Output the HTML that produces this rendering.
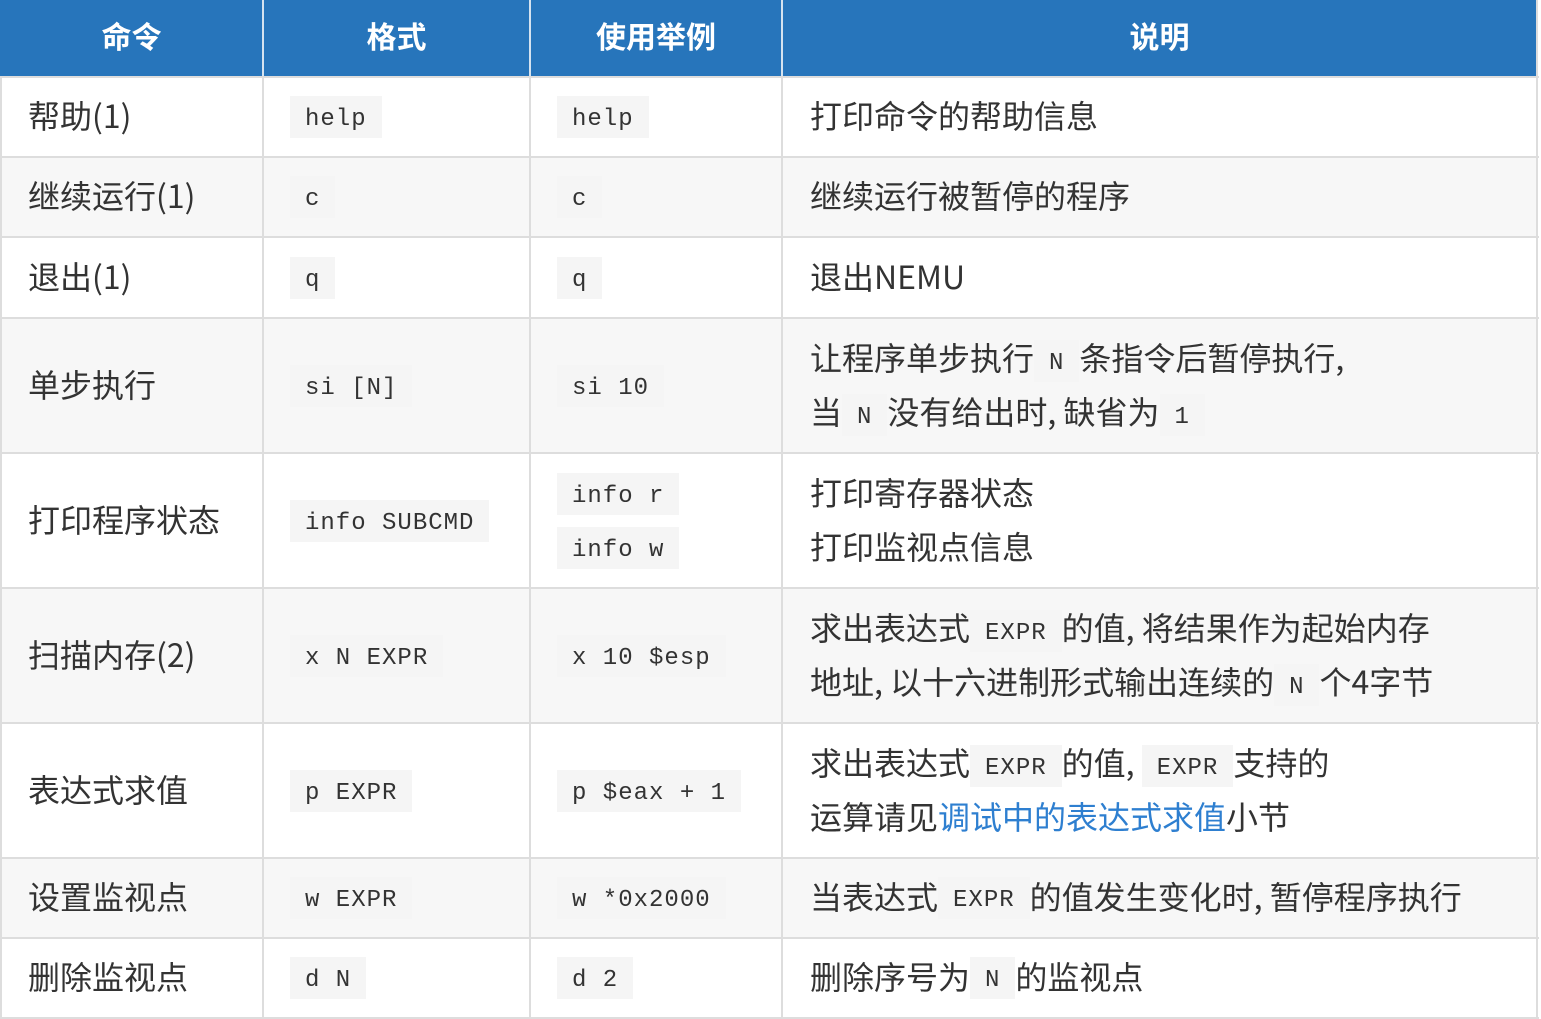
<!DOCTYPE html>
<html><head><meta charset="utf-8"><style>
*{margin:0;padding:0;box-sizing:border-box}
body{width:1541px;height:1019px;background:#fff;position:relative;overflow:hidden;font-family:"Noto Sans CJK SC","Liberation Sans",sans-serif;color:#333}
.c{position:absolute;display:flex;align-items:center;font-size:32px;padding-bottom:4px}
.h{background:#2775bb;color:#fff;font-weight:bold;justify-content:center;font-size:30px;padding-bottom:8px}
.g{background:#f7f7f7}
.vl{position:absolute;top:0;width:2px;height:1019px;background:#ddd}
.hl{position:absolute;left:0;width:1539px;height:2px;background:#ddd}
code{font-family:"Liberation Mono","DejaVu Sans Mono",monospace;font-size:24px;background:#f5f5f5;padding:5px 15px 0;height:42px;line-height:37px;display:inline-block;letter-spacing:1px;color:#333;vertical-align:middle;position:relative;top:2px}
.ml{display:block;line-height:54px}
.ml code{top:0}
.col{flex-direction:column;align-items:flex-start;justify-content:center}
a{color:#2e7fd0;text-decoration:none}
</style></head><body>
<div class="c h" style="left:0;top:0;width:263px;height:77px">命令</div>
<div class="c h" style="left:263px;top:0;width:267px;height:77px">格式</div>
<div class="c h" style="left:530px;top:0;width:252px;height:77px">使用举例</div>
<div class="c h" style="left:782px;top:0;width:755px;height:77px">说明</div>

<div class="c g" style="left:0;top:157px;width:1537px;height:80px"></div>
<div class="c g" style="left:0;top:318px;width:1537px;height:135px"></div>
<div class="c g" style="left:0;top:588px;width:1537px;height:135px"></div>
<div class="c g" style="left:0;top:858px;width:1537px;height:80px"></div>

<div class="c" style="left:28px;top:77px;height:80px">帮助(1)</div>
<div class="c" style="left:290px;top:77px;height:80px"><code>help</code></div>
<div class="c" style="left:557px;top:77px;height:80px"><code>help</code></div>
<div class="c t" style="left:810px;top:77px;height:80px">打印命令的帮助信息</div>

<div class="c" style="left:28px;top:157px;height:80px">继续运行(1)</div>
<div class="c" style="left:290px;top:157px;height:80px"><code>c</code></div>
<div class="c" style="left:557px;top:157px;height:80px"><code>c</code></div>
<div class="c t" style="left:810px;top:157px;height:80px">继续运行被暂停的程序</div>

<div class="c" style="left:28px;top:237px;height:81px">退出(1)</div>
<div class="c" style="left:290px;top:237px;height:81px"><code>q</code></div>
<div class="c" style="left:557px;top:237px;height:81px"><code>q</code></div>
<div class="c t" style="left:810px;top:237px;height:81px">退出NEMU</div>

<div class="c" style="left:28px;top:318px;height:135px">单步执行</div>
<div class="c" style="left:290px;top:318px;height:135px"><code>si [N]</code></div>
<div class="c" style="left:557px;top:318px;height:135px"><code>si 10</code></div>
<div class="c t col" style="left:810px;top:318px;height:135px"><span class="ml">让程序单步执行<code>N</code>条指令后暂停执行,</span><span class="ml">当<code>N</code>没有给出时, 缺省为<code>1</code></span></div>

<div class="c" style="left:28px;top:453px;height:135px">打印程序状态</div>
<div class="c" style="left:290px;top:453px;height:135px"><code>info SUBCMD</code></div>
<div class="c col" style="left:557px;top:453px;height:135px"><code style="margin-bottom:12px">info r</code><code>info w</code></div>
<div class="c t col" style="left:810px;top:453px;height:135px"><span class="ml">打印寄存器状态</span><span class="ml">打印监视点信息</span></div>

<div class="c" style="left:28px;top:588px;height:135px">扫描内存(2)</div>
<div class="c" style="left:290px;top:588px;height:135px"><code>x N EXPR</code></div>
<div class="c" style="left:557px;top:588px;height:135px"><code>x 10 $esp</code></div>
<div class="c t col" style="left:810px;top:588px;height:135px"><span class="ml">求出表达式<code>EXPR</code>的值, 将结果作为起始内存</span><span class="ml">地址, 以十六进制形式输出连续的<code>N</code>个4字节</span></div>

<div class="c" style="left:28px;top:723px;height:135px">表达式求值</div>
<div class="c" style="left:290px;top:723px;height:135px"><code>p EXPR</code></div>
<div class="c" style="left:557px;top:723px;height:135px"><code>p $eax + 1</code></div>
<div class="c t col" style="left:810px;top:723px;height:135px"><span class="ml">求出表达式<code>EXPR</code>的值, <code>EXPR</code>支持的</span><span class="ml">运算请见<a>调试中的表达式求值</a>小节</span></div>

<div class="c" style="left:28px;top:858px;height:80px">设置监视点</div>
<div class="c" style="left:290px;top:858px;height:80px"><code>w EXPR</code></div>
<div class="c" style="left:557px;top:858px;height:80px"><code>w *0x2000</code></div>
<div class="c t" style="left:810px;top:858px;height:80px">当表达式<code>EXPR</code>的值发生变化时, 暂停程序执行</div>

<div class="c" style="left:28px;top:938px;height:80px">删除监视点</div>
<div class="c" style="left:290px;top:938px;height:80px"><code>d N</code></div>
<div class="c" style="left:557px;top:938px;height:80px"><code>d 2</code></div>
<div class="c t" style="left:810px;top:938px;height:80px">删除序号为<code>N</code>的监视点</div>

<div class="vl" style="left:0;top:77px;height:942px"></div>
<div class="vl" style="left:262px;top:77px;height:942px"></div>
<div class="vl" style="left:529px;top:77px;height:942px"></div>
<div class="vl" style="left:781px;top:77px;height:942px"></div>
<div class="vl" style="left:1536px"></div>
<div class="vl" style="left:262px;height:77px;background:#d5e3f0"></div>
<div class="vl" style="left:529px;height:77px;background:#d5e3f0"></div>
<div class="vl" style="left:781px;height:77px;background:#d5e3f0"></div>
<div class="hl" style="top:76px"></div>
<div class="hl" style="top:156px"></div>
<div class="hl" style="top:236px"></div>
<div class="hl" style="top:317px"></div>
<div class="hl" style="top:452px"></div>
<div class="hl" style="top:587px"></div>
<div class="hl" style="top:722px"></div>
<div class="hl" style="top:857px"></div>
<div class="hl" style="top:937px"></div>
<div class="hl" style="top:1017px"></div>
</body></html>
